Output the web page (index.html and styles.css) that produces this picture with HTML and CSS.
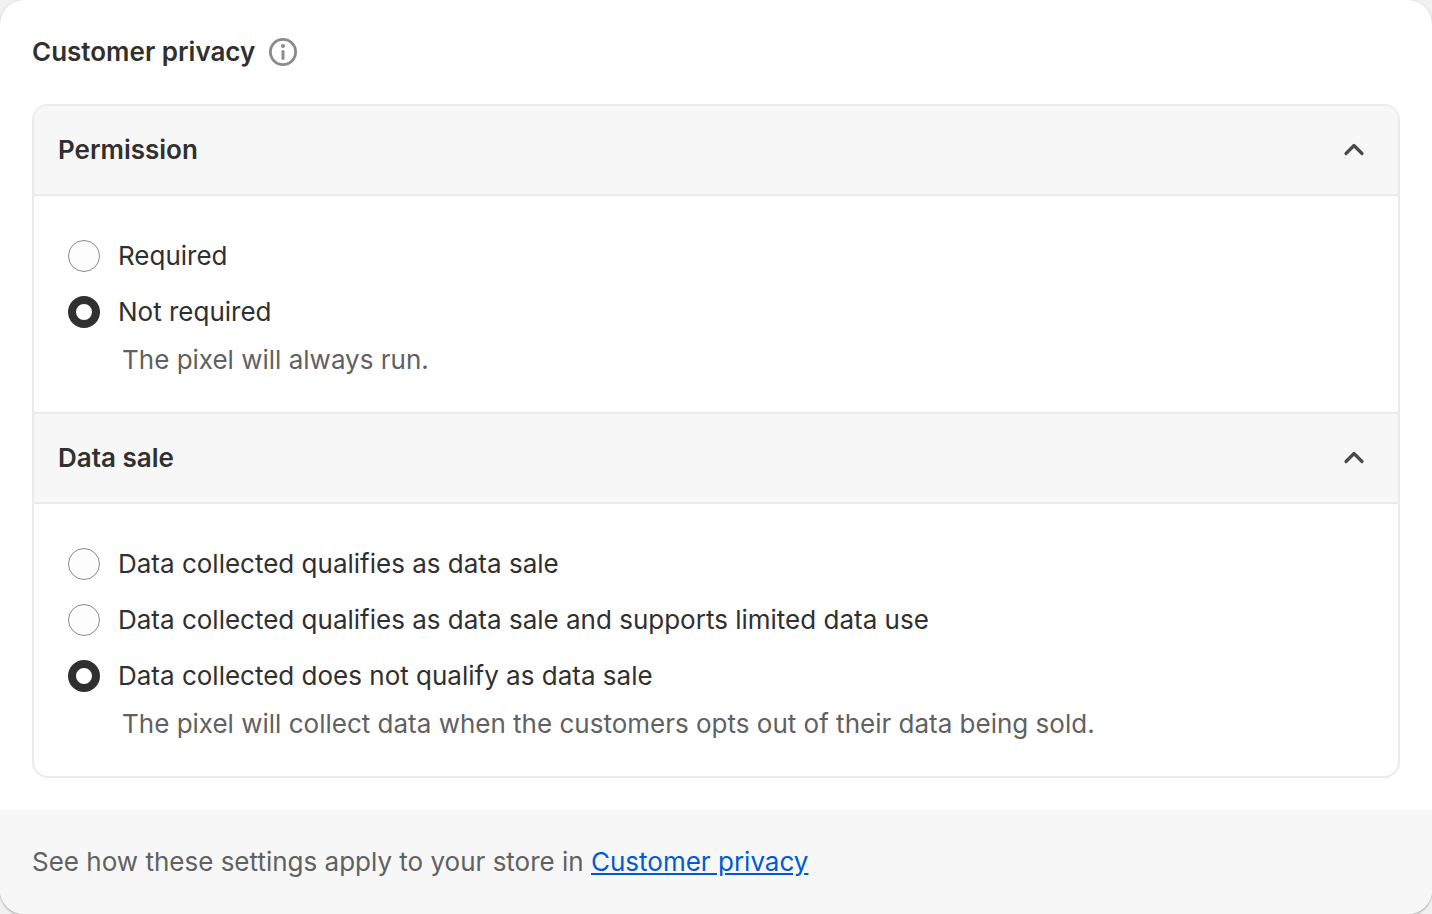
FILE: index.html
```html
<!DOCTYPE html>
<html lang="en">
<head>
    <meta charset="UTF-8">
    <meta name="viewport" content="width=device-width, initial-scale=1">
    <title>Customer privacy</title>
    <link rel="stylesheet" href="styles.css">
</head>

<body>

<main class="card">
    <div class="card-body">
        <div class="card-title">
            <h1>Customer privacy</h1>
            <button class="info-button" type="button" aria-label="About customer privacy">
                <svg class="icon" viewBox="0 0 40 40" aria-hidden="true">
                    <circle cx="20" cy="20" r="12.6" fill="none" stroke="currentColor" stroke-width="2.8"/>
                    <circle cx="20" cy="14" r="2" fill="currentColor"/>
                    <path d="M20 19.5v7" fill="none" stroke="currentColor" stroke-width="3" stroke-linecap="round"/>
                </svg>
            </button>
        </div>

        <form class="settings">
            <section>
                <h2>
                    <button class="section-toggle" type="button" aria-expanded="true" aria-controls="permission-options">
                        Permission
                        <svg class="icon" viewBox="0 0 40 40" aria-hidden="true">
                            <path d="M12 23.5l8-8 8 8" fill="none" stroke="currentColor" stroke-width="3.2" stroke-linecap="round" stroke-linejoin="round"/>
                        </svg>
                    </button>
                </h2>
                <div class="options" id="permission-options" role="radiogroup" aria-label="Permission">
                    <div class="option">
                        <input id="permission-required" name="permission" type="radio" value="required">
                        <label for="permission-required">Required</label>
                    </div>
                    <div class="option">
                        <input id="permission-not-required" name="permission" type="radio" value="not-required" aria-describedby="permission-help" checked>
                        <label for="permission-not-required">Not required</label>
                    </div>
                    <p class="help-text" id="permission-help">The pixel will always run.</p>
                </div>
            </section>

            <section>
                <h2>
                    <button class="section-toggle" type="button" aria-expanded="true" aria-controls="data-sale-options">
                        Data sale
                        <svg class="icon" viewBox="0 0 40 40" aria-hidden="true">
                            <path d="M12 23.5l8-8 8 8" fill="none" stroke="currentColor" stroke-width="3.2" stroke-linecap="round" stroke-linejoin="round"/>
                        </svg>
                    </button>
                </h2>
                <div class="options" id="data-sale-options" role="radiogroup" aria-label="Data sale">
                    <div class="option">
                        <input id="data-sale-qualifies" name="data-sale" type="radio" value="qualifies">
                        <label for="data-sale-qualifies">Data collected qualifies as data sale</label>
                    </div>
                    <div class="option">
                        <input id="data-sale-limited" name="data-sale" type="radio" value="limited">
                        <label for="data-sale-limited">Data collected qualifies as data sale and supports limited data use</label>
                    </div>
                    <div class="option">
                        <input id="data-sale-none" name="data-sale" type="radio" value="none" aria-describedby="data-sale-help" checked>
                        <label for="data-sale-none">Data collected does not qualify as data sale</label>
                    </div>
                    <p class="help-text" id="data-sale-help">The pixel will collect data when the customers opts out of their data being sold.</p>
                </div>
            </section>
        </form>
    </div>

    <footer class="card-footer">
        See how these settings apply to your store in <a href="#">Customer privacy</a>
    </footer>
</main>

</body>
</html>
```
FILE: styles.css
```css
:root {
    --text-color: #303030;
    --text-subdued-color: #616161;
    --icon-color: #4a4a4a;
    --icon-subdued-color: #8a8a8a;
    --link-color: #005bd3;
    --border-color: #ebebeb;
    --surface-color: #ffffff;
    --surface-subdued-color: #f7f7f7;
}

* {
    box-sizing: border-box;
}

body {
    margin: 0;
    background-color: #f1f1f1;
    color: var(--text-color);
    font-family: Inter, "Liberation Sans", sans-serif;
    font-size: 26px;
    font-weight: 425;
    font-optical-sizing: none;
    line-height: 40px;
}

h1, h2, p {
    margin: 0;
}

h1 {
    font-size: 26px;
    font-weight: 600;
}

.card {
    background-color: var(--surface-color);
    border-radius: 24px;
    box-shadow: 0 2px 2px rgba(0, 0, 0, 0.2), 0 0 2px rgba(0, 0, 0, 0.15);
    overflow: hidden;
}
.card-body {
    padding: 32px;
}
.card-title {
    display: flex;
    align-items: center;
    gap: 8px;
    margin-bottom: 32px;
}
.card-footer {
    padding: 32px;
    background-color: var(--surface-subdued-color);
    color: var(--text-subdued-color);
}
.card-footer a {
    color: var(--link-color);
}

.icon {
    display: block;
    flex: none;
    width: 40px;
    height: 40px;
}
.info-button {
    padding: 0;
    border: 0;
    background: none;
    color: var(--icon-subdued-color);
    cursor: pointer;
}

.settings {
    border: 2px solid var(--border-color);
    border-radius: 16px;
    overflow: hidden;
}
.settings section + section {
    border-top: 2px solid var(--border-color);
}
.section-toggle {
    display: flex;
    align-items: center;
    justify-content: space-between;
    width: 100%;
    padding: 24px;
    border: 0;
    border-bottom: 2px solid var(--border-color);
    background-color: var(--surface-subdued-color);
    color: var(--text-color);
    font: inherit;
    font-size: 26px;
    font-weight: 600;
    font-optical-sizing: none;
    line-height: 40px;
    text-align: left;
    cursor: pointer;
}
.section-toggle .icon {
    color: var(--icon-color);
}

.options {
    padding: 40px 34px 32px;
}
.option {
    display: flex;
    align-items: flex-start;
    gap: 18px;
}
.option + .option {
    margin-top: 16px;
}
.option input {
    flex: none;
    appearance: none;
    width: 32px;
    height: 32px;
    margin: 4px 0;
    border: 1px solid var(--icon-subdued-color);
    border-radius: 50%;
    background-color: #fdfdfd;
}
.option input:checked {
    border: 8px solid var(--text-color);
    background-color: var(--surface-color);
}
.help-text {
    margin-top: 8px;
    padding-left: 54px;
    color: var(--text-subdued-color);
}
```
